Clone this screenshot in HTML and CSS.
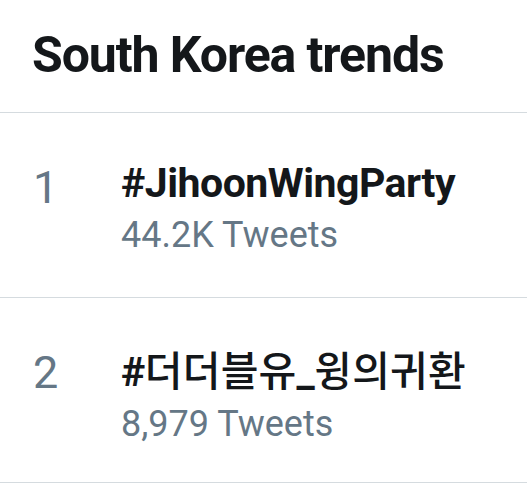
FILE: index.html
```html
<!DOCTYPE html>
<html lang="en">
<head>
<meta charset="utf-8">
<link rel="stylesheet" href="styles.css">
</head>
<body>
<div class="panel">
  <div class="header">
    <h2 class="title">South Korea trends</h2>
  </div>
  <div class="trend">
    <div class="rank">1</div>
    <div class="info">
      <div class="tag">#JihoonWingParty</div>
      <div class="count">44.2K Tweets</div>
    </div>
  </div>
  <div class="trend">
    <div class="rank">2</div>
    <div class="info">
      <div class="tag">#<span class="ko">더더블유</span>_<span class="ko">윙의귀환</span></div>
      <div class="count">8,979 Tweets</div>
    </div>
  </div>
</div>
</body>
</html>
```

FILE: styles.css
```css
html, body {
  margin: 0;
  padding: 0;
  background: #ffffff;
}
body {
  font-family: Roboto, "Noto Sans CJK KR", sans-serif;
  color: #14171a;
}
.panel {
  width: 527px;
}
.header {
  height: 113px;
  box-sizing: border-box;
  border-bottom: 1px solid #d5dbdf;
  padding-left: 32px;
  display: flex;
  align-items: flex-start;
}
.title {
  margin: 0;
  padding-top: 27px;
  font-size: 50px;
  line-height: 56px;
  font-weight: 700;
  letter-spacing: -1.1px;
}
.trend {
  height: 185px;
  box-sizing: border-box;
  border-bottom: 1px solid #d5dbdf;
  display: flex;
  padding-left: 33px;
}
.rank {
  width: 88px;
  padding-top: 49px;
  font-size: 45px;
  line-height: 52px;
  color: #657786;
}
.info {
  padding-top: 46px;
}
.tag {
  font-size: 41px;
  line-height: 48px;
  font-weight: 700;
  letter-spacing: -0.5px;
}
.ko {
  font-family: "Noto Sans CJK KR", sans-serif;
  font-weight: 500;
  letter-spacing: 0.2px;
  font-size: 41px;
}
.count {
  margin-top: 7px;
  font-size: 36px;
  line-height: 42px;
  color: #657786;
}
```
